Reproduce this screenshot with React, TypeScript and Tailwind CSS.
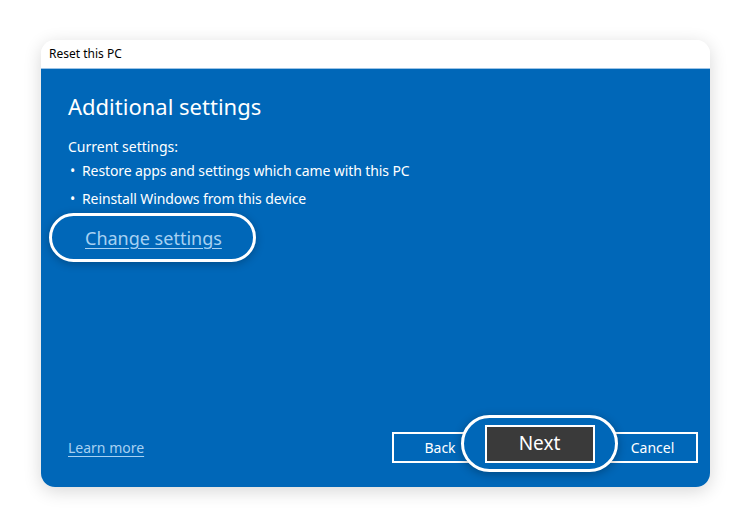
const FONT = { fontFamily: '"Noto Sans", "Open Sans", sans-serif' }

const CURRENT = [
  'Restore apps and settings which came with this PC',
  'Reinstall Windows from this device',
]

export default function App() {
  return (
    <div className="w-[750px] h-[527px] bg-white pt-[40px] pl-[41px]" style={FONT}>
      {/* Dialog window */}
      <div className="w-[669px] h-[447px] rounded-[14px] overflow-hidden flex flex-col shadow-[0_4px_18px_rgba(0,0,0,0.16)]">

        {/* Title bar */}
        <div className="h-[29px] bg-white flex items-center pl-[8px] border-b border-[#9cc3e6]">
          <span className="text-[12px] text-black leading-none">Reset this PC</span>
        </div>

        {/* Body */}
        <div className="flex-1 bg-[#0067b8] flex flex-col text-white">
          <div className="flex-1 pl-[27px] pt-[22px]">
            <h1 className="text-[22px] leading-[30px] font-normal">Additional settings</h1>

            <p className="text-[14px] leading-[20px] mt-[16px]">Current settings:</p>
            <ul className="mt-[4px] space-y-[8px]">
              {CURRENT.map(item => (
                <li key={item} className="flex text-[14px] leading-[20px] tracking-[-0.1px]">
                  <span className="w-[14px] pl-[2px]">•</span>
                  <span>{item}</span>
                </li>
              ))}
            </ul>

            {/* highlighted link */}
            <div className="-ml-[19px] mt-[4px] w-[207px] h-[49px] rounded-full border-[3px] border-white flex items-center pl-[33px] shadow-[0_2px_8px_rgba(0,0,0,0.25)]">
              <a className="text-[18px] leading-none text-[#a7d1f2] underline underline-offset-[3px] decoration-1 cursor-pointer">
                Change settings
              </a>
            </div>
          </div>

          {/* Footer row */}
          <div className="flex items-center justify-between pl-[27px] pr-[12px] pb-[24px]">
            <a className="text-[14px] leading-none text-[#a7d1f2] underline underline-offset-[3px] decoration-1 cursor-pointer">
              Learn more
            </a>

            <div className="relative flex gap-[4px]">
              <button className="w-[96px] h-[31px] border-2 border-white text-[14px] leading-none">Back</button>
              <div className="w-[105px] h-[31px] border-2 border-white" />
              <button className="w-[97px] h-[31px] border-2 border-white text-[14px] leading-none pl-[6px]">Cancel</button>

              {/* highlighted Next */}
              <div className="absolute left-[69px] -top-[17px] w-[157px] h-[57px] rounded-full border-[3px] border-white bg-[#0067b8] flex items-center justify-center shadow-[0_2px_10px_rgba(0,0,0,0.3)]">
                <button className="w-[110px] h-[38px] bg-[#3a3a3a] border-2 border-white text-[19px] leading-none">Next</button>
              </div>
            </div>
          </div>
        </div>
      </div>
    </div>
  )
}
